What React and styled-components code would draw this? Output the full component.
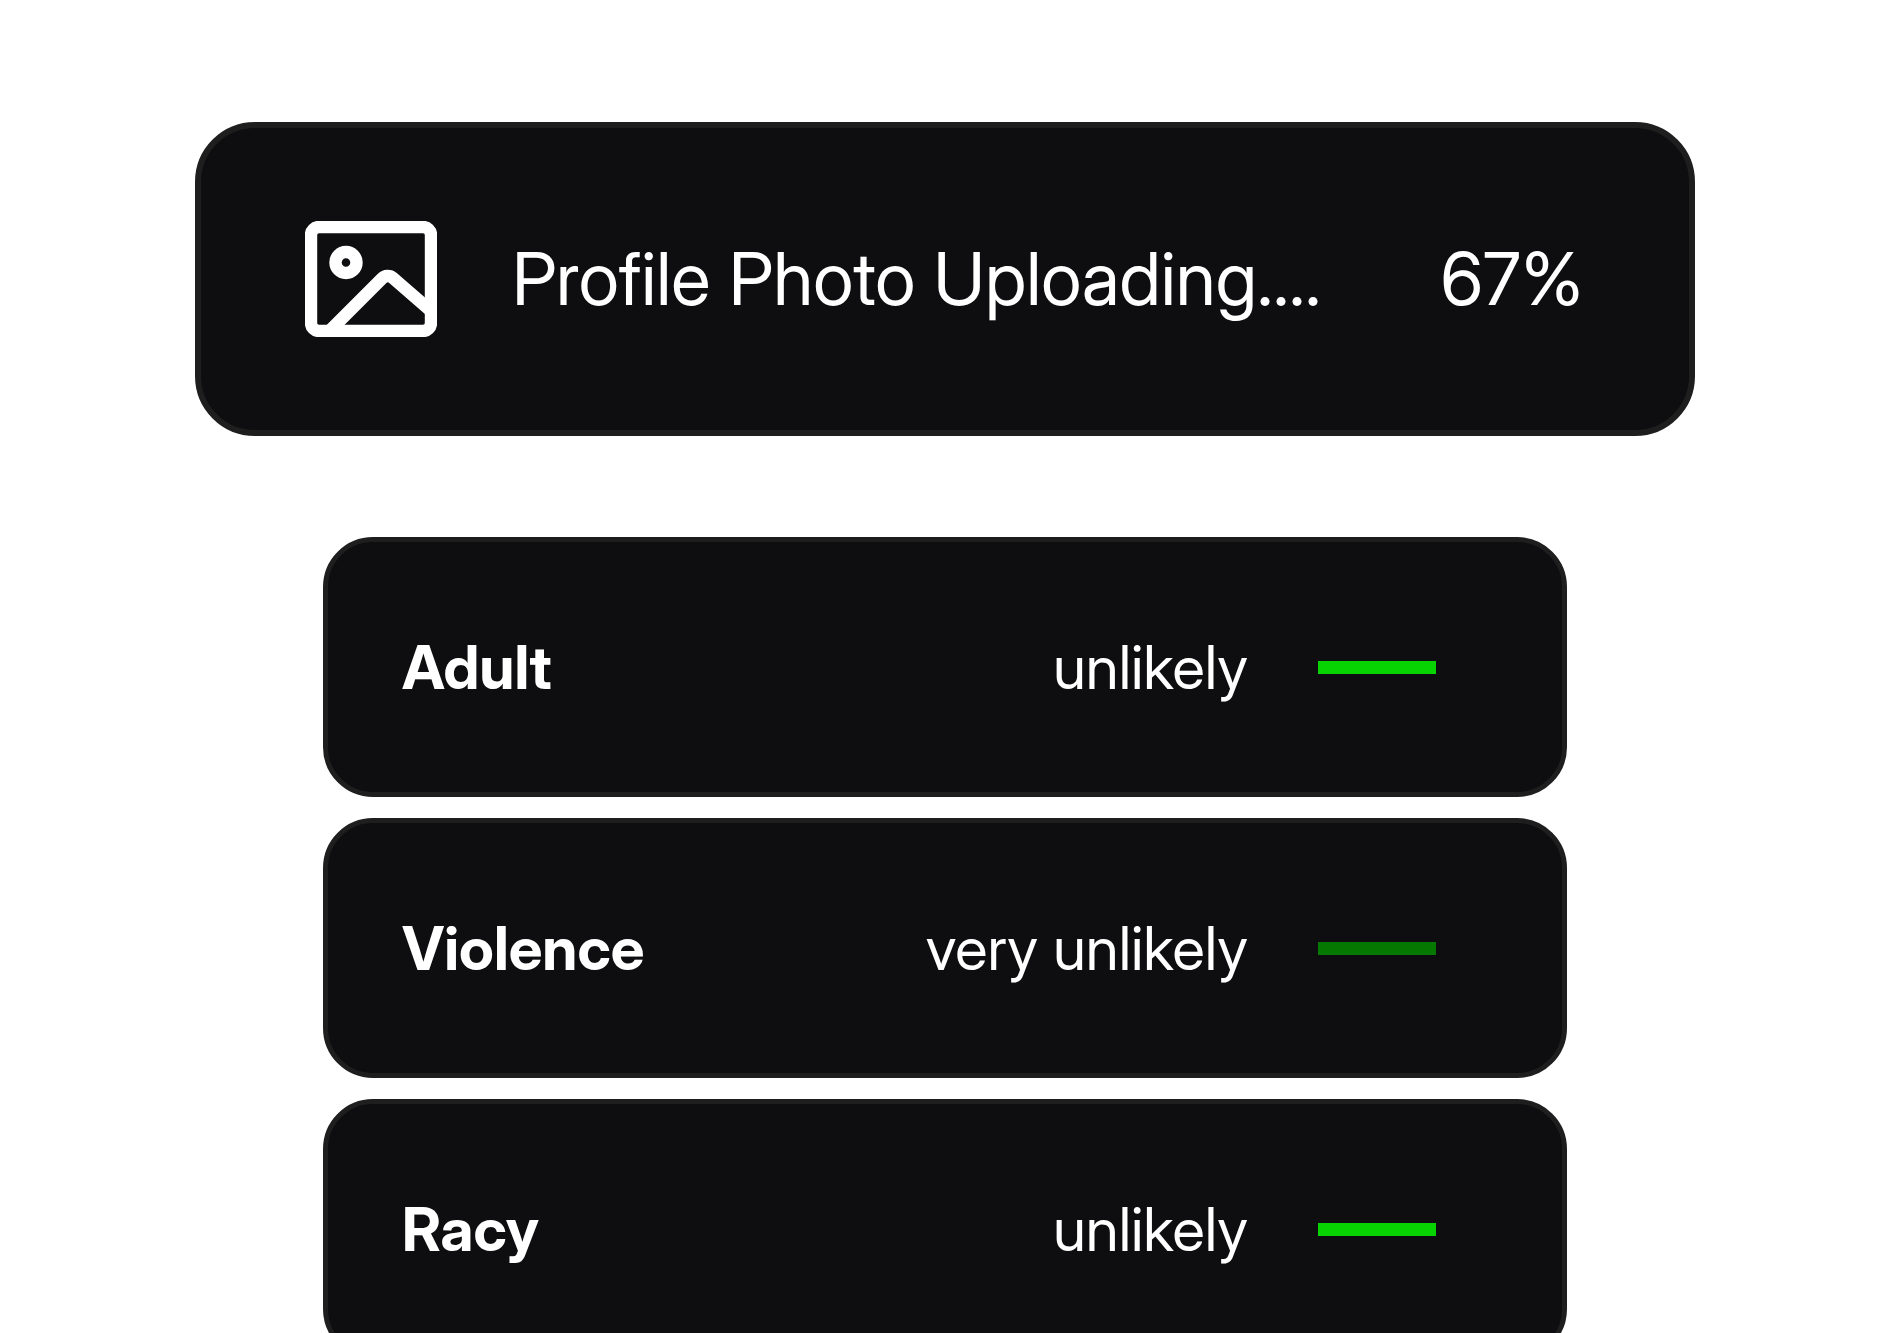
import styled, { createGlobalStyle } from "styled-components";

const ratings = [
  { label: "Adult", value: "unlikely" },
  { label: "Violence", value: "very unlikely" },
  { label: "Racy", value: "unlikely" },
];

const levelColors = {
  unlikely: "#08d302",
  "very unlikely": "#057802",
};

/**
 * Upload progress with the safety ratings of the photo
 */
export default function App() {
  return (
    <Page>
      <GlobalStyle />
      <UploadCard>
        <PhotoIcon />
        <UploadLabel>Profile Photo Uploading....</UploadLabel>
        <UploadPercent>67%</UploadPercent>
      </UploadCard>
      <RatingList>
        {ratings.map(({ label, value }) => (
          <Rating key={label}>
            <RatingLabel>{label}</RatingLabel>
            <RatingValue>{value}</RatingValue>
            <Level $color={levelColors[value]} />
          </Rating>
        ))}
      </RatingList>
    </Page>
  );
}

function PhotoIcon() {
  return (
    <Icon viewBox="0 0 132 116" aria-hidden="true">
      <rect x="6" y="6" width="120" height="104" rx="8" />
      <circle cx="41" cy="41.5" r="10.5" />
      <path d="M24 110.5L77 57.5A8 8 0 0 1 88 57L126 90" />
    </Icon>
  );
}

const GlobalStyle = createGlobalStyle`
  * {
    box-sizing: border-box;
  }
  body {
    margin: 0;
    background: #ffffff;
    color: #ffffff;
    font-family: "Inter Display", Inter, "Liberation Sans", sans-serif;
    font-optical-sizing: auto;
    font-variation-settings: "opsz" 32;
  }
`;
const Page = styled.main`
  height: 100vh;
  padding: 122px 195px 0;
  overflow: hidden;
`;
const UploadCard = styled.section`
  display: flex;
  align-items: center;
  padding: 93px 106px 93px 104px;
  border: 6px solid #1e1e1e;
  border-radius: 60px;
  background: #0e0e10;
  font-size: 73px;
  line-height: 88px;
  white-space: nowrap;
`;
const Icon = styled.svg`
  flex: none;
  width: 132px;
  height: 116px;
  margin-right: 75px;
  fill: none;
  stroke: #ffffff;
  stroke-width: 12.4px;
`;
const UploadLabel = styled.span`
  flex: 1;
`;
const UploadPercent = styled.span`
  flex: none;
`;
const RatingList = styled.ul`
  display: flex;
  flex-direction: column;
  gap: 21px;
  margin: 101px 0 0;
  padding: 0 128px;
  list-style: none;
`;
const Rating = styled.li`
  display: flex;
  align-items: center;
  padding: 89px 126px 89px 74px;
  border: 5px solid #1e1e1e;
  border-radius: 50px;
  background: #0e0e10;
  font-size: 60px;
  line-height: 72px;
  white-space: nowrap;
`;
const RatingLabel = styled.strong`
  flex: 1;
  font-weight: 700;
`;
const RatingValue = styled.span`
  margin-right: 70px;
`;
const Level = styled.span`
  flex: none;
  width: 118px;
  height: 13px;
  background: ${({ $color }) => $color};
`;
